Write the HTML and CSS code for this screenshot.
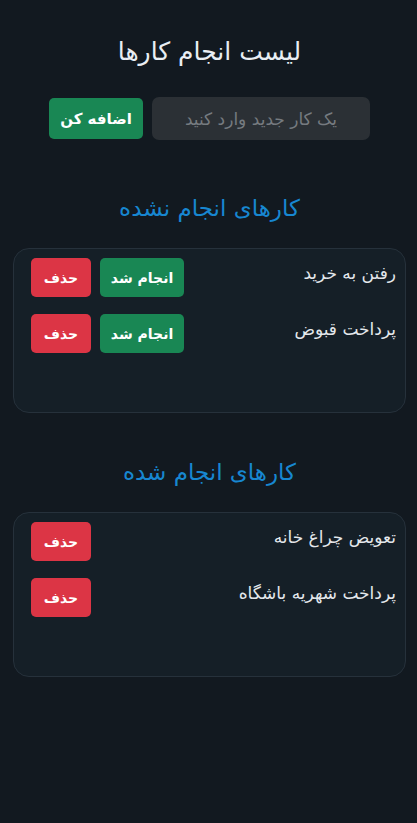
FILE: index.html
```html
<!DOCTYPE html>
<html lang="fa" dir="rtl">
<head>
<meta charset="utf-8">
<title>لیست انجام کارها</title>
<link rel="stylesheet" href="styles.css">
</head>
<body>
<div class="app">
  <h1 class="title">لیست انجام کارها</h1>
  <form class="add-form">
    <input class="add-input" type="text" placeholder="یک کار جدید وارد کنید">
    <button type="button" class="btn btn-green add-btn">اضافه کن</button>
  </form>

  <h2 class="section-title">کارهای انجام نشده</h2>
  <ul class="card">
    <li class="item">
      <span class="item-text">رفتن به خرید</span>
      <div class="actions">
        <button class="btn btn-green">انجام شد</button>
        <button class="btn btn-red">حذف</button>
      </div>
    </li>
    <li class="item">
      <span class="item-text">پرداخت قبوض</span>
      <div class="actions">
        <button class="btn btn-green">انجام شد</button>
        <button class="btn btn-red">حذف</button>
      </div>
    </li>
  </ul>

  <h2 class="section-title">کارهای انجام شده</h2>
  <ul class="card">
    <li class="item">
      <span class="item-text">تعویض چراغ خانه</span>
      <div class="actions">
        <button class="btn btn-red">حذف</button>
      </div>
    </li>
    <li class="item">
      <span class="item-text">پرداخت شهریه باشگاه</span>
      <div class="actions">
        <button class="btn btn-red">حذف</button>
      </div>
    </li>
  </ul>
</div>
</body>
</html>
```

FILE: styles.css
```css
* { box-sizing: border-box; }
html, body {
  margin: 0;
  padding: 0;
  background: #121920;
  color: #e4e8ec;
  font-family: "DejaVu Sans", "Noto Sans", sans-serif;
}
.app {
  padding: 32px 11px 40px 13px;
  display: flex;
  flex-direction: column;
  align-items: stretch;
}
.title {
  margin: 0;
  text-align: center;
  font-size: 25px;
  font-weight: normal;
  line-height: 40px;
  color: #e9eef3;
}
.add-form {
  margin: 25px 0 0;
  display: flex;
  justify-content: center;
  gap: 9px;
}
.add-input {
  width: 218px;
  height: 43px;
  background: #2b3035;
  border: none;
  border-radius: 7px;
  color: #e4e8ec;
  font-family: inherit;
  font-size: 17px;
  padding: 0 12px;
  text-align: center;
}
.add-input::placeholder { color: #767b80; }
.btn {
  font-family: inherit;
  font-weight: bold;
  font-size: 14px;
  color: #ffffff;
  border: none;
  border-radius: 5px;
  height: 39px;
  padding: 0 6px;
  white-space: nowrap;
  cursor: pointer;
}
.add-btn { height: 41px; width: 94px; margin-top: 1px; font-size: 15px; }
.btn-green { background: #198754; }
.btn-red { background: #dc3545; }
.section-title {
  margin: 50px 0 0;
  text-align: center;
  font-size: 23px;
  font-weight: normal;
  line-height: 36px;
  color: #1787d1;
}
.card {
  list-style: none;
  margin: 22px 0 0;
  padding: 9px 9px 10px 17px;
  min-height: 165px;
  background: #151f27;
  border: 1px solid #26313b;
  border-radius: 16px;
  display: flex;
  flex-direction: column;
  gap: 17px;
}
.card + .section-title { margin-top: 41px; }
.item {
  display: flex;
  justify-content: space-between;
  align-items: flex-start;
}
.item-text {
  font-size: 17px;
  line-height: 30px;
  color: #e4e8ec;
}
.actions {
  display: flex;
  gap: 9px;
}
.actions .btn-green { width: 84px; }
.actions .btn-red { width: 60px; }
```
